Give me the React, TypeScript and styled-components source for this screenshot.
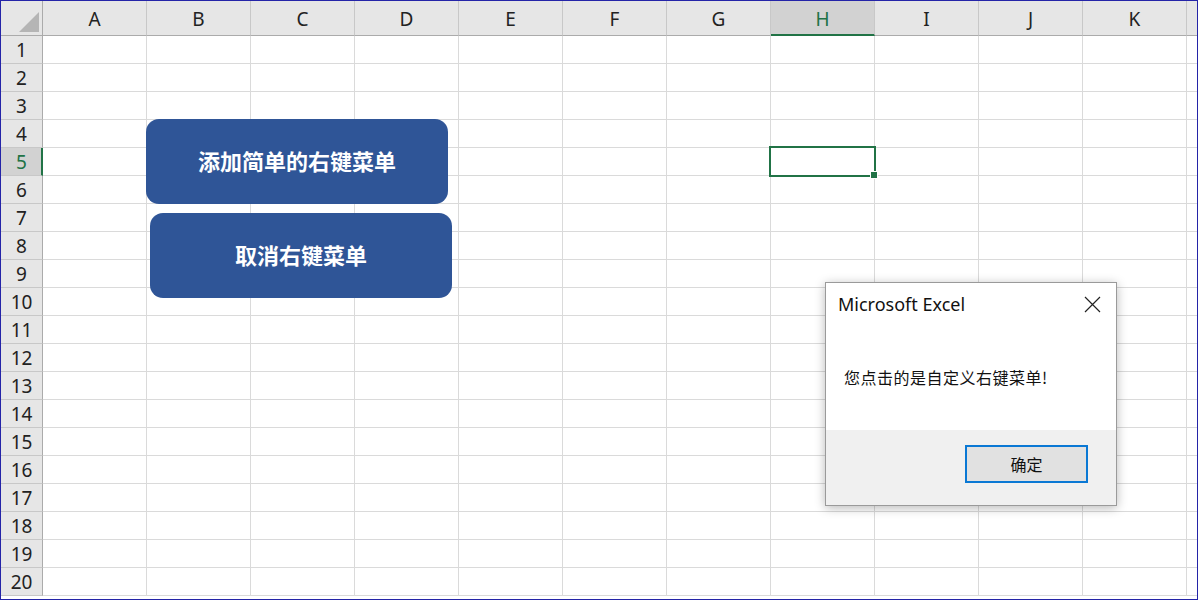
import styled, { createGlobalStyle, css } from 'styled-components'

const GlobalStyle = createGlobalStyle`
  html, body {
    margin: 0;
    padding: 0;
    background: #ffffff;
  }
  body {
    font-family: "Noto Sans", "Noto Sans CJK SC", sans-serif;
  }
`

const COLS = ['A', 'B', 'C', 'D', 'E', 'F', 'G', 'H', 'I', 'J', 'K']
const ROWS = Array.from({ length: 20 }, (_, i) => i + 1)
const ACTIVE_COL = 'H'
const ACTIVE_ROW = 5

const green = '#217346'

// outer window frame (blue edge of the capture)
const Frame = styled.div`
  position: relative;
  width: 1198px;
  height: 600px;
  box-sizing: border-box;
  border: 1px solid #2424a8;
  overflow: hidden;
  background: #ffffff;
`

const Sheet = styled.div`
  display: grid;
  grid-template-columns: 42px repeat(11, 104px) 1fr;
  grid-template-rows: 35px repeat(20, 28px);
`

const headerText = css`
  font-family: "Noto Sans", "Liberation Sans", sans-serif;
  font-size: 19px;
  color: #222;
  display: flex;
  align-items: center;
  justify-content: center;
  box-sizing: border-box;
`

const Corner = styled.div`
  background: #e6e6e6;
  border-right: 1px solid #ababab;
  border-bottom: 1px solid #ababab;
  display: flex;
  align-items: flex-end;
  justify-content: flex-end;
  padding: 0 3px 3px 0;
  box-sizing: border-box;
`

const ColHeader = styled.div<{ $active?: boolean }>`
  ${headerText}
  background: ${p => (p.$active ? '#d2d2d2' : '#e6e6e6')};
  color: ${p => (p.$active ? green : '#222')};
  border-right: 1px solid #c8c8c8;
  border-bottom: ${p => (p.$active ? `2px solid ${green}` : '1px solid #ababab')};
  padding-top: ${p => (p.$active ? '2px' : '1px')};
`

const HeaderFill = styled.div`
  background: #e6e6e6;
  border-bottom: 1px solid #ababab;
`

const RowHeader = styled.div<{ $active?: boolean }>`
  ${headerText}
  background: ${p => (p.$active ? '#d2d2d2' : '#e6e6e6')};
  color: ${p => (p.$active ? green : '#222')};
  border-right: ${p => (p.$active ? `2px solid ${green}` : '1px solid #ababab')};
  border-bottom: 1px solid #c8c8c8;
  padding-left: ${p => (p.$active ? '1px' : '0')};
`

const Cell = styled.div`
  position: relative;
  border-right: 1px solid #dadada;
  border-bottom: 1px solid #dadada;
  box-sizing: border-box;
`

const RowFill = styled.div`
  border-bottom: 1px solid #dadada;
`

const Selection = styled.div`
  position: absolute;
  left: -2px;
  top: -2px;
  width: 107px;
  height: 31px;
  box-sizing: border-box;
  border: 2px solid ${green};
  z-index: 2;

  &::after {
    content: '';
    position: absolute;
    right: -4px;
    bottom: -4px;
    width: 6px;
    height: 6px;
    background: ${green};
    border: 1px solid #fff;
  }
`

// shapes drawn on the sheet canvas
const ShapeButton = styled.div<{ $x: number; $y: number }>`
  position: absolute;
  left: ${p => p.$x}px;
  top: ${p => p.$y}px;
  width: 302px;
  height: 85px;
  border-radius: 13px;
  background: #2f5597;
  color: #ffffff;
  font-family: "Noto Sans CJK SC", sans-serif;
  font-weight: 700;
  font-size: 22px;
  display: flex;
  align-items: center;
  justify-content: center;
  padding-bottom: 4px;
  box-sizing: border-box;
`

// message box
const Dialog = styled.div`
  position: absolute;
  left: 824px;
  top: 281px;
  width: 292px;
  height: 224px;
  box-sizing: border-box;
  border: 1px solid #9a9a9a;
  background: #ffffff;
  box-shadow: 0 2px 10px rgba(0, 0, 0, 0.28);
  display: flex;
  flex-direction: column;
  z-index: 5;
`

const TitleBar = styled.div`
  display: flex;
  align-items: center;
  justify-content: space-between;
  height: 42px;
  padding: 0 15px 0 12px;
`

const Title = styled.span`
  font-family: "Noto Sans", "Liberation Sans", sans-serif;
  font-size: 18px;
  color: #111;
`

const Message = styled.div`
  flex: 1;
  padding: 40px 0 0 18px;
  font-family: "Noto Sans CJK SC", sans-serif;
  font-size: 16px;
  letter-spacing: 0.5px;
  color: #111;
`

const Footer = styled.div`
  height: 75px;
  background: #f0f0f0;
  display: flex;
  align-items: flex-start;
  justify-content: flex-end;
  padding: 15px 28px 0 0;
  box-sizing: border-box;
`

const OkButton = styled.button`
  width: 123px;
  height: 38px;
  border: 2px solid #0a78d4;
  background: #e1e1e1;
  font-family: "Noto Sans CJK SC", sans-serif;
  font-size: 16px;
  color: #111;
  padding: 0;
`

function CloseIcon() {
  return (
    <svg width="17" height="17" viewBox="0 0 17 17">
      <path d="M1 1 L16 16 M16 1 L1 16" stroke="#222" strokeWidth="1.2" fill="none" />
    </svg>
  )
}

export default function App() {
  return (
    <>
      <GlobalStyle />
      <Frame>
        <Sheet>
          <Corner>
            <svg width="20" height="20" viewBox="0 0 20 20">
              <polygon points="20,0 20,20 0,20" fill="#b5b5b5" />
            </svg>
          </Corner>
          {COLS.map(c => (
            <ColHeader key={c} $active={c === ACTIVE_COL}>{c}</ColHeader>
          ))}
          <HeaderFill />

          {ROWS.map(r => (
            <Row key={r} row={r} />
          ))}
        </Sheet>

        <ShapeButton $x={145} $y={118}>添加简单的右键菜单</ShapeButton>
        <ShapeButton $x={149} $y={212}>取消右键菜单</ShapeButton>

        <Dialog>
          <TitleBar>
            <Title>Microsoft Excel</Title>
            <CloseIcon />
          </TitleBar>
          <Message>您点击的是自定义右键菜单!</Message>
          <Footer>
            <OkButton>确定</OkButton>
          </Footer>
        </Dialog>
      </Frame>
    </>
  )
}

function Row({ row }: { row: number }) {
  return (
    <>
      <RowHeader $active={row === ACTIVE_ROW}>{row}</RowHeader>
      {COLS.map(c => (
        <Cell key={c}>
          {row === ACTIVE_ROW && c === ACTIVE_COL && <Selection />}
        </Cell>
      ))}
      <RowFill />
    </>
  )
}
